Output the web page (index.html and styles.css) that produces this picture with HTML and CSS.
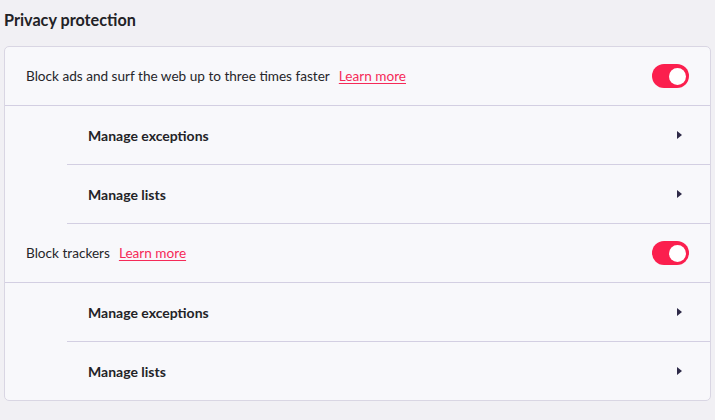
FILE: index.html
```html
<!DOCTYPE html>
<html lang="en">
<head>
<meta charset="utf-8">
<title>Privacy protection</title>
<link rel="stylesheet" href="styles.css">
</head>
<body>
<main class="page">
  <h2 class="section-title">Privacy protection</h2>
  <div class="card">
    <div class="row">
      <span class="label">Block ads and surf the web up to three times faster</span>
      <a class="learn" href="#">Learn more</a>
      <span class="toggle on"><span class="knob"></span></span>
    </div>
    <div class="row sub">
      <span class="label strong">Manage exceptions</span>
      <span class="arrow"></span>
    </div>
    <div class="row sub">
      <span class="label strong">Manage lists</span>
      <span class="arrow"></span>
    </div>
    <div class="row">
      <span class="label">Block trackers</span>
      <a class="learn" href="#">Learn more</a>
      <span class="toggle on"><span class="knob"></span></span>
    </div>
    <div class="row sub">
      <span class="label strong">Manage exceptions</span>
      <span class="arrow"></span>
    </div>
    <div class="row sub last">
      <span class="label strong">Manage lists</span>
      <span class="arrow"></span>
    </div>
  </div>
</main>
</body>
</html>
```

FILE: styles.css
```css
* { box-sizing: border-box; }

html, body {
  margin: 0;
  padding: 0;
  background: #f1f0f4;
  font-family: Lato, "Open Sans", sans-serif;
  color: #2b2b2f;
}

.page {
  padding: 8px 4px 0 4px;
}

.section-title {
  margin: 0 0 14px 0;
  font-size: 16.2px;
  line-height: 24px;
  font-weight: 700;
  color: #222226;
}

.card {
  background: #f8f8fb;
  border: 1px solid #d9d6e3;
  border-radius: 5px;
  display: flex;
  flex-direction: column;
}

.row {
  display: flex;
  align-items: center;
  height: 59px;
  padding: 0 21px;
  border-bottom: 1px solid #d3cfe2;
}

.row.sub {
  margin-left: 62px;
  padding-left: 21px;
  padding-right: 28px;
}

.row.last {
  border-bottom: none;
  height: 58px;
}

.label {
  font-size: 13.6px;
  color: #26262a;
}

.label.strong {
  font-size: 14px;
  font-weight: 700;
  color: #232327;
}

.learn {
  margin-left: 9px;
  font-size: 13.6px;
  color: #f52a58;
  text-decoration: underline;
  text-underline-offset: 2px;
}

.toggle {
  margin-left: auto;
  width: 37px;
  height: 24px;
  border-radius: 12px;
  background: #fb1f4e;
  display: flex;
  align-items: center;
  justify-content: flex-end;
  padding-right: 3px;
}

.knob {
  width: 17px;
  height: 17px;
  border-radius: 50%;
  background: #ffffff;
}

.arrow {
  margin-left: auto;
  width: 0;
  height: 0;
  border-top: 4.5px solid transparent;
  border-bottom: 4.5px solid transparent;
  border-left: 5px solid #2e2a48;
}
```
